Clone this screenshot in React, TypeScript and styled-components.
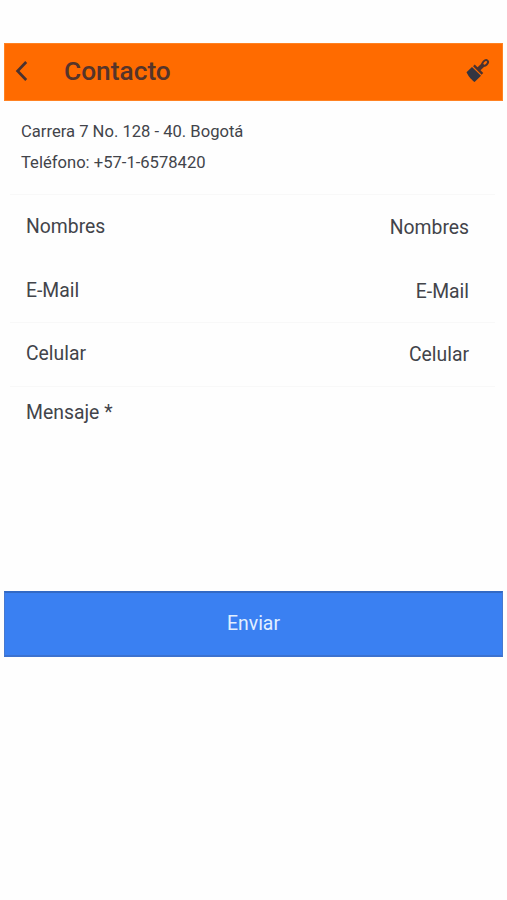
import React from 'react';
import styled, { createGlobalStyle } from 'styled-components';

const GlobalStyle = createGlobalStyle`
  * { box-sizing: border-box; }
  body { margin: 0; background: #fefefe; font-family: Roboto, sans-serif; color: #42444a; }
`;

const Screen = styled.main`
  width: 507px;
  height: 900px;
  padding: 43px 4px 0;
  display: flex;
  flex-direction: column;
`;

const Header = styled.header`
  width: 499px;
  height: 58px;
  flex: none;
  display: flex;
  align-items: center;
  background: #ff6b00;
  border: 1px solid #ff8222;
  padding: 0 12px 2px 9px;
`;

const Title = styled.h1`
  margin: 0 auto 0 34px;
  font-size: 26.3px;
  line-height: 54px;
  font-weight: 500;
  color: #55342a;
`;

const IconButton = styled.button`
  display: flex;
  padding: 0;
  border: 0;
  background: none;
  color: #4a3230;
`;

const Address = styled.address`
  height: 93px;
  padding: 16px 17px 0;
  font-style: normal;
  font-size: 16.6px;
  line-height: 30.5px;
`;

const Row = styled.label<{ $line?: boolean; $lift: number }>`
  height: 64px;
  margin: 0 8px 0 6px;
  padding: 0 26px ${(p) => p.$lift}px 16px;
  display: flex;
  align-items: center;
  justify-content: space-between;
  font-size: 19.35px;
  border-top: 1px solid ${(p) => (p.$line ? '#f8f8f8' : 'transparent')};
`;

const Value = styled.span`
  padding-top: 2px;
`;

const Message = styled.label`
  height: 205px;
  margin: 0 8px 0 6px;
  padding: 14px 16px 0;
  font-size: 19.4px;
  line-height: 24px;
  border-top: 1px solid #f8f8f8;
`;

const Submit = styled.button`
  width: 499px;
  height: 66px;
  flex: none;
  padding: 0 0 1px;
  border: 1px solid #4779cf;
  border-top: 2px solid #3269c4;
  border-bottom: 2px solid #3c72d0;
  background: #3a80f2;
  color: #e2efff;
  font-family: inherit;
  font-size: 19.4px;
`;

const fields = [
  { label: 'Nombres', line: true, lift: 0 },
  { label: 'E-Mail', line: false, lift: 0 },
  { label: 'Celular', line: true, lift: 2 },
];

function BackIcon() {
  return (
    <svg width="16" height="24" viewBox="0 0 16 24" fill="none" stroke="currentColor" strokeWidth="2.7">
      <path d="M12.2 3 L3.6 12 L12.2 21" />
    </svg>
  );
}

function BrushIcon() {
  return (
    <svg width="24" height="26" viewBox="0 0 24 26">
      <path d="M0.5 14.2 L6 8.9 L15 17.8 L8.6 24 Q6.8 23 6 21.8 L4.8 20.8 Q2 17.5 0.5 14.2Z" fill="#333541" />
      <path d="M7.9 7.3 L16.4 15.8" stroke="currentColor" strokeWidth="2.4" />
      <path d="M12 11.8 L17.5 6.5" stroke="currentColor" strokeWidth="4.2" />
      <ellipse cx="19.2" cy="4.9" rx="3.2" ry="2.2" transform="rotate(-45 19.2 4.9)" fill="none" stroke="currentColor" strokeWidth="2" />
    </svg>
  );
}

export default function App() {
  return (
    <>
      <GlobalStyle />
      <Screen>
        <Header>
          <IconButton aria-label="Volver"><BackIcon /></IconButton>
          <Title>Contacto</Title>
          <IconButton aria-label="Limpiar"><BrushIcon /></IconButton>
        </Header>
        <Address>
          Carrera 7 No. 128 - 40. Bogotá<br />
          Teléfono: +57-1-6578420
        </Address>
        {fields.map((f) => (
          <Row key={f.label} $line={f.line} $lift={f.lift}>
            <span>{f.label}</span>
            <Value>{f.label}</Value>
          </Row>
        ))}
        <Message>Mensaje *</Message>
        <Submit>Enviar</Submit>
      </Screen>
    </>
  );
}
